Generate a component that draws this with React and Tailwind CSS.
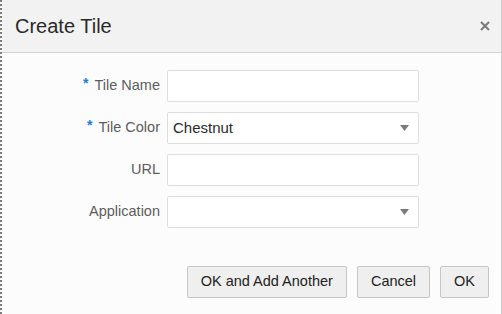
import { useState } from 'react';

const fields = [
  { label: 'Tile Name', required: true, type: 'text' },
  { label: 'Tile Color', required: true, type: 'select', value: 'Chestnut' },
  { label: 'URL', required: false, type: 'text' },
  { label: 'Application', required: false, type: 'select', value: '' },
];

function CloseIcon() {
  return (
    <svg width="10" height="10" viewBox="0 0 10 10" className="block">
      <path d="M1 1L9 9M9 1L1 9" stroke="#7a7a7a" strokeWidth="2" strokeLinecap="butt" />
    </svg>
  );
}

function Caret() {
  return (
    <svg width="9" height="6" viewBox="0 0 9 6" className="block">
      <path d="M0 0H9L4.5 6Z" fill="#7b7b7b" />
    </svg>
  );
}

function Field({ field }) {
  const [val, setVal] = useState(field.value || '');
  return (
    <div className="flex items-center h-[32px]">
      {/* Label column */}
      <div className="w-[107px] flex items-center justify-end pr-[7px] text-[14.5px] text-[#5c5c5c]">
        {field.required && (
          <span className="text-[#1a7dd6] text-[14px] leading-none mr-[6px] -mt-[7px] font-bold">*</span>
        )}
        <span>{field.label}</span>
      </div>
      {field.type === 'select' ? (
        <div className="w-[252px] h-[32px] border border-[#dedede] rounded-[2px] bg-white flex items-center justify-between pl-[5px] pr-[9px]">
          <span className="text-[15px] text-[#2b2b2b]">{val}</span>
          <Caret />
        </div>
      ) : (
        <input
          value={val}
          onChange={e => setVal(e.target.value)}
          className="w-[252px] h-[32px] border border-[#dedede] rounded-[2px] bg-white px-[5px] text-[15px] outline-none"
        />
      )}
    </div>
  );
}

export default function App() {
  return (
    <div
      className="w-[502px] h-[314px] border-l-2 border-dotted border-[#7d7d7d] bg-[#fcfcfc] text-[#2b2b2b]"
      style={{ fontFamily: '"Liberation Sans", Arial, sans-serif' }}
    >
      <div className="h-full flex flex-col border-r border-[#c9c9c9]">
        {/* Header */}
        <div className="h-[53px] flex-shrink-0 bg-[#f2f2f2] border-b border-[#d4d4d4] flex items-center justify-between pl-[13px] pr-[11px]">
          <span className="text-[20px] text-[#2a2a2a]">Create Tile</span>
          <CloseIcon />
        </div>

        {/* Body */}
        <div className="flex-1 flex flex-col pt-[17px] pb-[16px]">
          <div className="flex flex-col gap-[10px] pl-[58px]">
            {fields.map(f => (
              <Field key={f.label} field={f} />
            ))}
          </div>

          {/* Footer */}
          <div className="mt-auto flex justify-end gap-[10px] pr-[12px]">
            {['OK and Add Another', 'Cancel', 'OK'].map(label => (
              <button
                key={label}
                className="h-[32px] px-[13px] bg-[#efefef] border border-[#c6c6c6] rounded-[2px] text-[14.5px] text-[#222]"
              >
                {label}
              </button>
            ))}
          </div>
        </div>
      </div>
    </div>
  );
}
